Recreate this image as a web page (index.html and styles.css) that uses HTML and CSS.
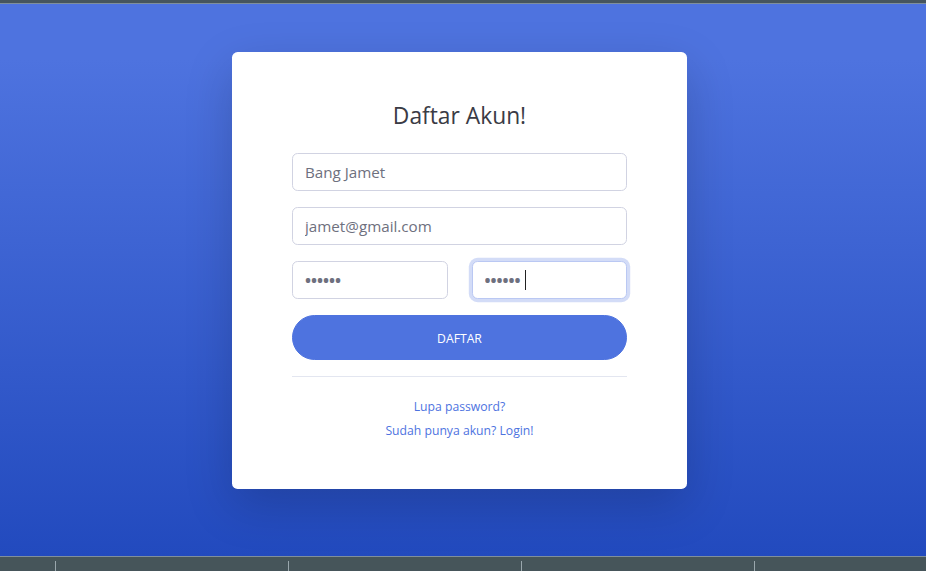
FILE: index.html
```html
<!DOCTYPE html>
<html lang="id">
<head>
<meta charset="utf-8">
<title>Daftar Akun</title>
<link rel="stylesheet" href="styles.css">
</head>
<body>
<div class="topbar"></div>
<main class="main">
  <div class="card">
    <h4 class="title">Daftar Akun!</h4>
    <form class="form">
      <div class="group"><input class="control" type="text" value="Bang Jamet"></div>
      <div class="group"><input class="control" type="email" value="jamet@gmail.com"></div>
      <div class="group row">
        <input class="control" type="password" value="123456">
        <div class="caret-wrap"><input class="control focus" type="password" value="123456"></div>
      </div>
      <button class="btn" type="button">DAFTAR</button>
    </form>
    <hr class="divider">
    <div class="links">
      <div><a class="small" href="#">Lupa password?</a></div>
      <div><a class="small" href="#">Sudah punya akun? Login!</a></div>
    </div>
  </div>
</main>
<div class="taskbar">
  <span class="tick"></span>
  <span class="tick"></span>
  <span class="tick"></span>
  <span class="tick"></span>
</div>
</body>
</html>
```

FILE: styles.css
```css
* { box-sizing: border-box; }
html, body { margin: 0; padding: 0; }
body {
  width: 926px;
  height: 571px;
  display: flex;
  flex-direction: column;
  font-family: "Segoe UI", "Open Sans", "Noto Sans", sans-serif;
  font-size: 16px;
  line-height: 1.5;
  color: #858796;
  overflow: hidden;
}
.topbar {
  height: 4px;
  background: #46555e;
  border-bottom: 1px solid #7f8f9c;
  flex: none;
}
.main {
  flex: 1;
  background: linear-gradient(180deg, #4e73df 10%, #224abe 100%);
  display: flex;
  justify-content: center;
  align-items: flex-start;
  padding-top: 48px;
  padding-right: 7px;
}
.card {
  width: 455px;
  background: #fff;
  border-radius: 5.6px;
  box-shadow: 0 16px 48px rgba(0, 0, 0, .175);
  padding: 48px 60px;
}
.title {
  margin: 0 0 22px;
  padding-top: 2px;
  font-size: 22.8px;
  font-weight: 400;
  line-height: 28.8px;
  color: #3a3b45;
  text-align: center;
}
.group { margin-bottom: 16px; }
.row {
  display: grid;
  grid-template-columns: 1fr 1fr;
  column-gap: 24px;
}
.control {
  display: block;
  width: 100%;
  height: 38px;
  padding: 6px 12px;
  font-family: inherit;
  font-size: 15.2px;
  color: #6e707e;
  background: #fff;
  border: 1px solid #d1d3e2;
  border-radius: 5.6px;
  outline: none;
}
.control[type="password"] { font-size: 16px; font-weight: 700; }
.focus {
  border-color: #bac8f3;
  box-shadow: 0 0 0 3.2px rgba(78, 115, 223, .25);
}
.caret-wrap { position: relative; }
.caret-wrap::after {
  content: "";
  position: absolute;
  left: 53px;
  top: 9px;
  width: 1px;
  height: 20px;
  background: #222;
}
.btn {
  display: block;
  width: 100%;
  height: 45px;
  padding: 3px 0 0;
  border: 1px solid #4e73df;
  border-radius: 160px;
  background: #4e73df;
  color: #fff;
  font-family: inherit;
  font-size: 12.2px;
  line-height: 1.5;
  cursor: pointer;
}
.divider {
  margin: 16px 0;
  border: 0;
  border-top: 1px solid #e3e6f0;
}
.links { text-align: center; }
.links div { height: 24px; line-height: 24px; }
.small {
  font-size: 12.2px;
  color: #4e73df;
  text-decoration: none;
}
.taskbar {
  height: 15px;
  flex: none;
  background: #46555a;
  border-top: 1px solid #7f8f9c;
  display: flex;
  padding-left: 55px;
  gap: 232px;
}
.tick {
  width: 1px;
  height: 10px;
  margin-top: 4px;
  background: #9aa7ad;
}
```
